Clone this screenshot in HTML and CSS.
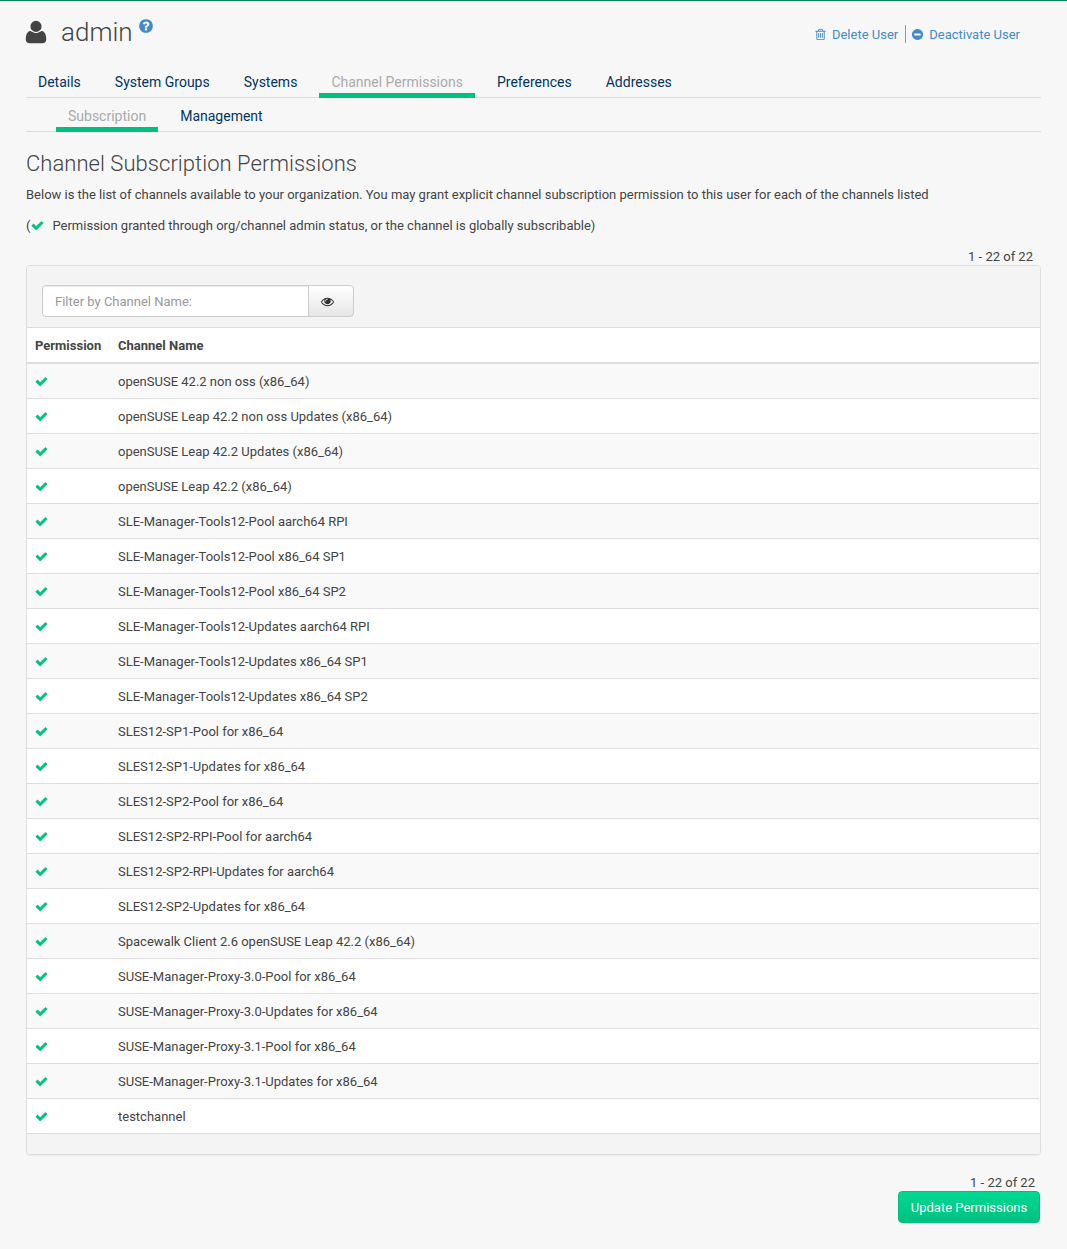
FILE: index.html
```
<!DOCTYPE html>
<html lang="en">
<head>
<meta charset="utf-8">
<title>admin - Channel Subscription Permissions</title>
<link rel="stylesheet" href="styles.css">
</head>
<body>
<svg class="sprite" aria-hidden="true">
  <symbol id="check" viewBox="0 0 1792 1792"><path d="M1671 566q0 40-28 68l-724 724-136 136q-28 28-68 28t-68-28l-136-136-362-362q-28-28-28-68t28-68l136-136q28-28 68-28t68 28l294 295 656-657q28-28 68-28t68 28l136 136q28 28 28 68z"/></symbol>
  <symbol id="user" viewBox="0 0 1792 1792"><path d="M1600 1405q0 120-73 189.500t-194 69.500h-874q-121 0-194-69.500t-73-189.500q0-53 3.500-103.500t14-109 26.500-108.500 43-97.500 62-81 85.500-53.500 111.500-20q9 0 42 21.500t74.500 48 108 48 133.500 21.500 133.500-21.500 108-48 74.500-48 42-21.500q61 0 111.500 20t85.500 53.500 62 81 43 97.500 26.500 108.500 14 109 3.500 103.500zm-320-893q0 159-112.500 271.500t-271.500 112.500-271.500-112.500-112.500-271.500 112.500-271.500 271.500-112.500 271.500 112.500 112.500 271.500z"/></symbol>
  <symbol id="help" viewBox="0 0 1792 1792"><path d="M1024 1376v-192q0-14-9-23t-23-9h-192q-14 0-23 9t-9 23v192q0 14 9 23t23 9h192q14 0 23-9t9-23zm256-672q0-88-55.500-163t-138.500-116-170-41q-243 0-371 213-15 24 8 42l132 100q7 6 19 6 16 0 25-12 53-68 86-92 34-24 86-24 48 0 85.500 26t37.500 59q0 38-20 61t-68 45q-63 28-115.500 86.500t-52.500 125.500v36q0 14 9 23t23 9h192q14 0 23-9t9-23q0-19 21.500-49.500t54.500-49.500q32-18 49-28.500t46-35 44.500-48 28-60.500 12.500-81zm384 192q0 209-103 385.500t-279.500 279.500-385.500 103-385.500-103-279.500-279.500-103-385.500 103-385.500 279.500-279.500 385.500-103 385.500 103 279.500 279.500 103 385.500z"/></symbol>
  <symbol id="trash" viewBox="0 0 1792 1792"><path d="M704 736v576q0 14-9 23t-23 9h-64q-14 0-23-9t-9-23v-576q0-14 9-23t23-9h64q14 0 23 9t9 23zm256 0v576q0 14-9 23t-23 9h-64q-14 0-23-9t-9-23v-576q0-14 9-23t23-9h64q14 0 23 9t9 23zm256 0v576q0 14-9 23t-23 9h-64q-14 0-23-9t-9-23v-576q0-14 9-23t23-9h64q14 0 23 9t9 23zm128 724v-948h-896v948q0 22 7 40.500t14.500 27 10.500 8.500h832q3 0 10.500-8.500t14.500-27 7-40.500zm-672-1076h448l-48-117q-7-9-17-11h-317q-10 2-17 11zm928 32v64q0 14-9 23t-23 9h-96v948q0 83-47 143.500t-113 60.500h-832q-66 0-113-58.500t-47-141.500v-952h-96q-14 0-23-9t-9-23v-64q0-14 9-23t23-9h309l70-167q15-37 54-63t79-26h320q40 0 79 26t54 63l70 167h309q14 0 23 9t9 23z"/></symbol>
  <symbol id="minus" viewBox="0 0 1792 1792"><path d="M1344 960v-128q0-26-19-45t-45-19h-768q-26 0-45 19t-19 45v128q0 26 19 45t45 19h768q26 0 45-19t19-45zm320-64q0 209-103 385.500t-279.500 279.500-385.500 103-385.500-103-279.500-279.500-103-385.500 103-385.500 279.500-279.500 385.500-103 385.500 103 279.500 279.500 103 385.500z"/></symbol>
  <symbol id="eye" viewBox="0 0 1792 1792"><path d="M1664 960q-152-236-381-353 61 104 61 225 0 185-131.500 316.500t-316.500 131.500-316.500-131.500-131.500-316.500q0-121 61-225-229 117-381 353 133 205 333.500 326.500t434.500 121.500 434.500-121.500 333.500-326.500zm-720-384q0-20-14-34t-34-14q-125 0-214.500 89.500t-89.500 214.500q0 20 14 34t34 14 34-14 14-34q0-86 61-147t147-61q20 0 34-14t14-34zm848 384q0 34-20 69-140 230-376.500 368.500t-499.500 138.500-499.500-139-376.500-368q-20-35-20-69t20-69q140-229 376.500-368t499.500-139 499.500 139 376.500 368q20 35 20 69z"/></symbol>
</svg>
<main class="page">
  <header class="page-header">
    <h1><svg class="icon-user"><use href="#user"/></svg><span>admin</span><a class="help" href="#"><svg><use href="#help"/></svg></a></h1>
    <div class="toolbar">
      <a class="delete" href="#"><svg class="icon"><use href="#trash"/></svg><span>Delete User</span></a>
      <a class="deactivate" href="#"><svg class="icon"><use href="#minus"/></svg><span>Deactivate User</span></a>
    </div>
  </header>
  <nav class="tabs">
    <a href="#">Details</a><a href="#">System Groups</a><a href="#">Systems</a><a class="active" href="#">Channel Permissions</a><a href="#">Preferences</a><a href="#">Addresses</a>
  </nav>
  <nav class="tabs subtabs">
    <a class="active" href="#">Subscription</a><a href="#">Management</a>
  </nav>
  <h2>Channel Subscription Permissions</h2>
  <p class="intro">Below is the list of channels available to your organization. You may grant explicit channel subscription permission to this user for each of the channels listed</p>
  <p class="legend">(<svg class="icon check"><use href="#check"/></svg><span>Permission granted through org/channel admin status, or the channel is globally subscribable)</span></p>
  <div class="count">1 - 22 of 22</div>
  <section class="panel">
    <div class="panel-heading">
      <input type="text" placeholder="Filter by Channel Name:"><button class="filter"><svg class="icon"><use href="#eye"/></svg></button>
    </div>
    <table>
      <thead><tr><th>Permission</th><th>Channel Name</th></tr></thead>
      <tbody>
        <tr><td><svg class="icon check"><use href="#check"/></svg></td><td>openSUSE 42.2 non oss (x86_64)</td></tr>
        <tr><td><svg class="icon check"><use href="#check"/></svg></td><td>openSUSE Leap 42.2 non oss Updates (x86_64)</td></tr>
        <tr><td><svg class="icon check"><use href="#check"/></svg></td><td>openSUSE Leap 42.2 Updates (x86_64)</td></tr>
        <tr><td><svg class="icon check"><use href="#check"/></svg></td><td>openSUSE Leap 42.2 (x86_64)</td></tr>
        <tr><td><svg class="icon check"><use href="#check"/></svg></td><td>SLE-Manager-Tools12-Pool aarch64 RPI</td></tr>
        <tr><td><svg class="icon check"><use href="#check"/></svg></td><td>SLE-Manager-Tools12-Pool x86_64 SP1</td></tr>
        <tr><td><svg class="icon check"><use href="#check"/></svg></td><td>SLE-Manager-Tools12-Pool x86_64 SP2</td></tr>
        <tr><td><svg class="icon check"><use href="#check"/></svg></td><td>SLE-Manager-Tools12-Updates aarch64 RPI</td></tr>
        <tr><td><svg class="icon check"><use href="#check"/></svg></td><td>SLE-Manager-Tools12-Updates x86_64 SP1</td></tr>
        <tr><td><svg class="icon check"><use href="#check"/></svg></td><td>SLE-Manager-Tools12-Updates x86_64 SP2</td></tr>
        <tr><td><svg class="icon check"><use href="#check"/></svg></td><td>SLES12-SP1-Pool for x86_64</td></tr>
        <tr><td><svg class="icon check"><use href="#check"/></svg></td><td>SLES12-SP1-Updates for x86_64</td></tr>
        <tr><td><svg class="icon check"><use href="#check"/></svg></td><td>SLES12-SP2-Pool for x86_64</td></tr>
        <tr><td><svg class="icon check"><use href="#check"/></svg></td><td>SLES12-SP2-RPI-Pool for aarch64</td></tr>
        <tr><td><svg class="icon check"><use href="#check"/></svg></td><td>SLES12-SP2-RPI-Updates for aarch64</td></tr>
        <tr><td><svg class="icon check"><use href="#check"/></svg></td><td>SLES12-SP2-Updates for x86_64</td></tr>
        <tr><td><svg class="icon check"><use href="#check"/></svg></td><td>Spacewalk Client 2.6 openSUSE Leap 42.2 (x86_64)</td></tr>
        <tr><td><svg class="icon check"><use href="#check"/></svg></td><td>SUSE-Manager-Proxy-3.0-Pool for x86_64</td></tr>
        <tr><td><svg class="icon check"><use href="#check"/></svg></td><td>SUSE-Manager-Proxy-3.0-Updates for x86_64</td></tr>
        <tr><td><svg class="icon check"><use href="#check"/></svg></td><td>SUSE-Manager-Proxy-3.1-Pool for x86_64</td></tr>
        <tr><td><svg class="icon check"><use href="#check"/></svg></td><td>SUSE-Manager-Proxy-3.1-Updates for x86_64</td></tr>
        <tr><td><svg class="icon check"><use href="#check"/></svg></td><td>testchannel</td></tr>
      </tbody>
    </table>
    <div class="panel-footer"></div>
  </section>
  <footer class="actions">
    <div class="count">1 - 22 of 22</div>
    <button class="primary">Update Permissions</button>
  </footer>
</main>
</body>
</html>
```
FILE: styles.css
```
* { box-sizing: border-box; }
body {
  margin: 0;
  background: #f7f7f7;
  color: #444;
  font: 13px/18px Roboto, sans-serif;
}
a { color: #428bca; text-decoration: none; }
svg { fill: currentColor; flex: none; }
.sprite { display: none; }
.icon { width: 13px; height: 13px; }
.check { color: #00c081; stroke: currentColor; stroke-width: 60px; }
.page {
  border-top: 1px solid #00885c;
  padding: 0 26px;
  height: 1249px;
}
.page-header {
  display: flex;
  justify-content: space-between;
  height: 65px;
}
h1 {
  display: flex;
  margin: 0;
  padding-top: 16px;
  font-size: 26px;
  font-weight: 300;
  line-height: 30px;
}
.icon-user { width: 26px; height: 26px; margin: 2px 12px 0 -3px; }
.help svg { display: block; width: 16px; height: 16px; margin: 1px 0 0 5px; }
.toolbar { display: flex; padding: 24px 21px 0 0; }
.toolbar a { display: flex; align-items: center; height: 18px; }
.toolbar span { padding-top: 2px; }
.toolbar .icon { margin-right: 5px; }
.delete { padding-right: 7px; border-right: 1px solid #999; }
.deactivate { padding-left: 5px; }
.tabs {
  display: flex;
  gap: 10px;
  height: 32px;
  border-bottom: 1px solid #ddd;
}
.tabs a {
  height: 32px;
  padding: 5px 12px 0;
  border-bottom: 5px solid transparent;
  color: #00355d;
  font-size: 14px;
  line-height: 22px;
}
.tabs .active { color: #aaa; border-color: #00c081; }
.subtabs { height: 34px; padding-left: 30px; }
.subtabs a { height: 34px; padding-top: 7px; }
h2 {
  margin: 18px 0 0;
  font-size: 22px;
  font-weight: 300;
  line-height: 28px;
  letter-spacing: .04px;
}
p { margin: 0; }
.intro { margin-top: 8px; letter-spacing: -.006px; }
.legend { display: flex; align-items: center; margin-top: 13px; }
.legend .icon { margin: -2px 0 0 1px; }
.legend span { margin-left: 8px; }
.count { height: 18px; text-align: right; padding-right: 8px; }
.legend + .count { height: 17px; margin-top: 13px; }
.panel {
  border: 1px solid #ddd;
  border-radius: 4px;
  background: #fff;
  box-shadow: 0 1px 1px rgba(0, 0, 0, .05);
  overflow: hidden;
}
.panel-heading {
  display: flex;
  height: 62px;
  padding: 19px 15px 10px;
  background: #f4f4f4;
  border-bottom: 1px solid #ddd;
}
input {
  width: 267px;
  height: 32px;
  padding: 6px 12px;
  border: 1px solid #ccc;
  border-radius: 4px 0 0 4px;
  background: #fff;
  font: inherit;
  box-shadow: inset 0 1px 1px rgba(0, 0, 0, .075);
}
input::placeholder { color: #999; }
.filter {
  display: flex;
  align-items: center;
  width: 46px;
  height: 32px;
  margin-left: -1px;
  padding: 0 12px;
  border: 1px solid #ccc;
  border-radius: 0 4px 4px 0;
  background: linear-gradient(#fff, #e6e6e6);
  color: #333;
}
table { width: calc(100% - 1px); border-collapse: separate; border-spacing: 0; }
th { height: 36px; padding: 2px 8px 0; border-bottom: 2px solid #ddd; text-align: left; font-weight: 700; }
th:first-child { width: 83px; }
td { height: 35px; padding: 2px 8px 0; border-bottom: 1px solid #ddd; }
td:first-child { padding-top: 0; }
td .icon { display: block; }
tbody tr:nth-child(odd) { background: #f9f9f9; }
tbody tr:last-child td { border-bottom: 0; height: 34px; }
.panel-footer { height: 21px; background: #f4f4f4; border-top: 1px solid #ddd; }
.actions { display: flex; flex-direction: column; align-items: flex-end; margin-top: 19px; padding-right: 1px; }
.actions .count { padding-right: 5px; height: 17px; }
.primary {
  width: 142px;
  height: 32px;
  padding: 2px 0 0;
  border: 1px solid #00c081;
  border-radius: 4px;
  background: linear-gradient(#00da92, #00c081);
  color: #fff;
  font: inherit;
}
```
